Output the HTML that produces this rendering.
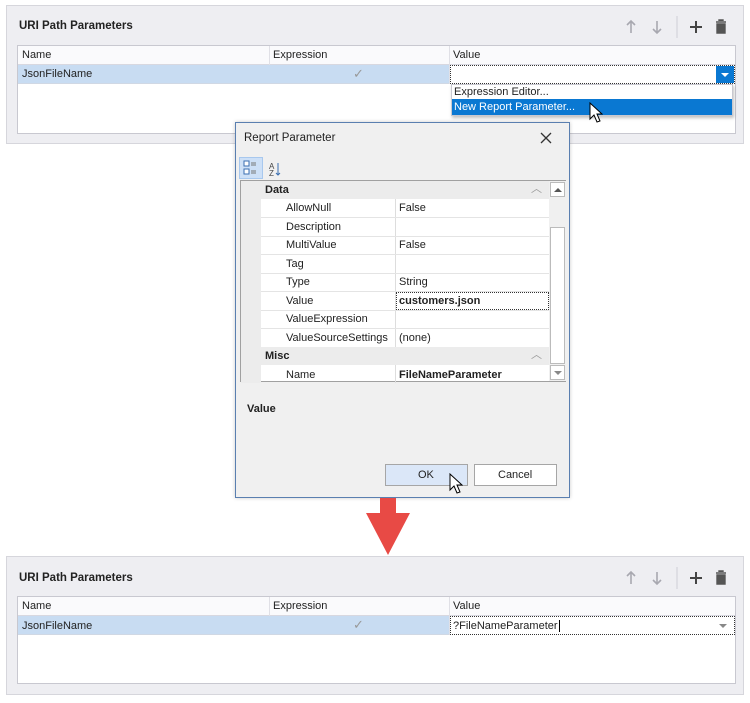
<!DOCTYPE html>
<html><head><style>
*{box-sizing:border-box;margin:0;padding:0}
body{width:750px;height:703px;background:#fff;position:relative;overflow:hidden;font-family:"Liberation Sans",sans-serif;font-size:11px;color:#222}
.a{position:absolute}
.panel{background:#eeeef2;border:1px solid #d6d6dc}
.title{font-weight:bold;font-size:11.5px;color:#222}
.grid{background:#fff;border:1px solid #c8c8d0}
.cell{position:absolute;white-space:nowrap}
.vl{position:absolute;width:1px;background:#e0e0e6}
.pg div{position:absolute;white-space:nowrap;line-height:13px}
</style></head><body>

<!-- TOP PANEL -->
<div class="a panel" style="left:6px;top:5px;width:738px;height:139px"></div>
<div class="a title" style="left:19px;top:20px">URI Path Parameters</div>
<svg class="a" style="left:620px;top:16px" width="120" height="24">
<path d="M11 5v12M7 9l4-4 4 4" stroke="#a8a8b0" stroke-width="1.6" fill="none"/>
<path d="M37 5v12M33 13l4 4 4-4" stroke="#a8a8b0" stroke-width="1.6" fill="none"/>
<line x1="57" y1="0" x2="57" y2="22" stroke="#cfcfd6"/>
<path d="M76 5v12M70 11h12" stroke="#444" stroke-width="2" fill="none"/>
<path d="M96 6h10M99 5v-1h4v1M97 8h8v9h-8z" stroke="#555" stroke-width="1.4" fill="#555"/>
</svg>
<div class="a grid" style="left:17px;top:45px;width:719px;height:89px"></div>
<div class="a" style="left:18px;top:46px;width:717px;height:19px;background:#fafafc;border-bottom:1px solid #d8d8e0"></div>
<div class="vl" style="left:269px;top:46px;height:38px"></div>
<div class="vl" style="left:449px;top:46px;height:38px"></div>
<div class="cell" style="left:22px;top:49px">Name</div>
<div class="cell" style="left:273px;top:49px">Expression</div>
<div class="cell" style="left:453px;top:49px">Value</div>
<div class="a" style="left:18px;top:65px;width:431px;height:19px;background:#c8dcf2;border-bottom:1px solid #d0d8e4"></div>
<div class="cell" style="left:22px;top:68px">JsonFileName</div>
<div class="cell" style="left:353px;top:66px;color:#999;font-size:13px">✓</div>
<div class="a" style="left:450px;top:65px;width:285px;height:19px;background:#fff;border:1px dotted #333"></div>
<div class="a" style="left:716px;top:66px;width:18px;height:17px;background:#0a78d2"></div>
<div class="a" style="left:721px;top:73px;border-left:4px solid transparent;border-right:4px solid transparent;border-top:4px solid #fff"></div>
<div class="a" style="left:451px;top:84px;width:282px;height:32px;background:#fff;border:1px solid #c8c8d0;box-shadow:1px 2px 3px rgba(0,0,0,.25)"></div>
<div class="cell" style="left:454px;top:86px">Expression Editor...</div>
<div class="a" style="left:452px;top:99px;width:280px;height:16px;background:#0a78d2"></div>
<div class="cell" style="left:454px;top:101px;color:#fff">New Report Parameter...</div>
<svg class="a" style="left:589px;top:102px" width="14" height="22"><path d="M1 1v16l4-4 3 7 3-1-3-7h5z" fill="#fff" stroke="#000"/></svg>

<!-- DIALOG -->
<div class="a" style="left:235px;top:122px;width:335px;height:376px;background:#f0f0f0;border:1px solid #5a7fb0;box-shadow:0 0 4px rgba(0,0,0,.2)"></div>
<div class="cell" style="left:244px;top:132px;font-size:11.5px">Report Parameter</div>
<svg class="a" style="left:539px;top:131px" width="14" height="14"><path d="M2 2l10 10M12 2L2 12" stroke="#333" stroke-width="1.3"/></svg>
<div class="a" style="left:239px;top:157px;width:24px;height:22px;background:#cde0f7;border:1px solid #a8c8ee"></div>
<svg class="a" style="left:243px;top:160px" width="40" height="18">
<rect x="1" y="1" width="5" height="5" fill="#fff" stroke="#3a6eb0"/><rect x="1" y="9" width="5" height="5" fill="#fff" stroke="#3a6eb0"/>
<path d="M8 3h5M8 5h5M8 11h5M8 13h5" stroke="#777"/>
<text x="26" y="9" font-size="8" font-family="Liberation Sans" fill="#444">A</text><text x="26" y="16" font-size="8" font-family="Liberation Sans" fill="#444">Z</text>
<path d="M35 3v12M33 13l2 2 2-2" stroke="#3a6eb0" fill="none"/>
</svg>
<div class="a pg" style="left:240px;top:180px;width:326px;height:202px;background:#fff;border:1px solid #a0a0a0">
 <div style="left:0;top:0;width:308px;height:18px;background:#ececec"></div>
 <div style="left:24px;top:3px;font-weight:bold">Data</div>
 <div style="left:290px;top:2px;color:#999">︿</div>
 <div style="left:0;top:18px;width:20px;height:148px;background:#ececec"></div>
 <div style="left:0;top:166px;width:308px;height:18px;background:#ececec"></div>
 <div style="left:24px;top:169px;font-weight:bold">Misc</div>
 <div style="left:290px;top:168px;color:#999">︿</div>
 <div style="left:0;top:184px;width:20px;height:18px;background:#ececec"></div>
 <div style="left:154px;top:18px;width:1px;height:148px;background:#ddd"></div>
 <div style="left:154px;top:184px;width:1px;height:18px;background:#ddd"></div>
 <div style="left:20px;top:36px;width:288px;height:1px;background:#e4e4e4"></div>
 <div style="left:20px;top:55px;width:288px;height:1px;background:#e4e4e4"></div>
 <div style="left:20px;top:73px;width:288px;height:1px;background:#e4e4e4"></div>
 <div style="left:20px;top:92px;width:288px;height:1px;background:#e4e4e4"></div>
 <div style="left:20px;top:110px;width:288px;height:1px;background:#e4e4e4"></div>
 <div style="left:20px;top:129px;width:288px;height:1px;background:#e4e4e4"></div>
 <div style="left:20px;top:147px;width:288px;height:1px;background:#e4e4e4"></div>
 <div style="left:45px;top:21px">AllowNull</div><div style="left:158px;top:21px">False</div>
 <div style="left:45px;top:40px">Description</div>
 <div style="left:45px;top:58px">MultiValue</div><div style="left:158px;top:58px">False</div>
 <div style="left:45px;top:77px">Tag</div>
 <div style="left:45px;top:95px">Type</div><div style="left:158px;top:95px">String</div>
 <div style="left:155px;top:111px;width:153px;height:18px;border:1px dotted #333"></div>
 <div style="left:45px;top:114px">Value</div><div style="left:158px;top:114px;font-weight:bold">customers.json</div>
 <div style="left:45px;top:132px">ValueExpression</div>
 <div style="left:45px;top:151px">ValueSourceSettings</div><div style="left:158px;top:151px">(none)</div>
 <div style="left:45px;top:188px">Name</div><div style="left:158px;top:188px;font-weight:bold">FileNameParameter</div>
 <div style="left:308px;top:0;width:17px;height:200px;background:#f0f0f0"></div>
 <div style="left:309px;top:1px;width:15px;height:15px;border:1px solid #bbb;background:#fff"></div>
 <div style="left:313px;top:7px;border-left:4px solid transparent;border-right:4px solid transparent;border-bottom:4px solid #555"></div>
 <div style="left:309px;top:46px;width:15px;height:137px;border:1px solid #bbb;background:#fff"></div>
 <div style="left:309px;top:184px;width:15px;height:15px;border:1px solid #bbb;background:#fff"></div>
 <div style="left:313px;top:190px;border-left:4px solid transparent;border-right:4px solid transparent;border-top:4px solid #888"></div>
</div>
<div class="cell" style="left:247px;top:403px;font-weight:bold">Value</div>
<div class="a" style="left:385px;top:464px;width:83px;height:22px;background:#dbe7f8;border:1px solid #a6a6a6"></div>
<div class="cell" style="left:418px;top:469px">OK</div>
<div class="a" style="left:474px;top:464px;width:83px;height:22px;background:#fff;border:1px solid #a6a6a6"></div>
<div class="cell" style="left:498px;top:469px">Cancel</div>
<svg class="a" style="left:449px;top:473px" width="14" height="22"><path d="M1 1v16l4-4 3 7 3-1-3-7h5z" fill="#fff" stroke="#000"/></svg>

<!-- ARROW -->
<svg class="a" style="left:363px;top:498px" width="50" height="60"><path d="M17 0h16v15h14L25 57 3 15h14z" fill="#e84a45"/></svg>

<!-- BOTTOM PANEL -->
<div class="a panel" style="left:6px;top:556px;width:738px;height:139px"></div>
<div class="a title" style="left:19px;top:572px">URI Path Parameters</div>
<svg class="a" style="left:620px;top:567px" width="120" height="24">
<path d="M11 5v12M7 9l4-4 4 4" stroke="#a8a8b0" stroke-width="1.6" fill="none"/>
<path d="M37 5v12M33 13l4 4 4-4" stroke="#a8a8b0" stroke-width="1.6" fill="none"/>
<line x1="57" y1="0" x2="57" y2="22" stroke="#cfcfd6"/>
<path d="M76 5v12M70 11h12" stroke="#444" stroke-width="2" fill="none"/>
<path d="M96 6h10M99 5v-1h4v1M97 8h8v9h-8z" stroke="#555" stroke-width="1.4" fill="#555"/>
</svg>
<div class="a grid" style="left:17px;top:596px;width:719px;height:88px"></div>
<div class="a" style="left:18px;top:597px;width:717px;height:19px;background:#fafafc;border-bottom:1px solid #d8d8e0"></div>
<div class="vl" style="left:269px;top:597px;height:38px"></div>
<div class="vl" style="left:449px;top:597px;height:38px"></div>
<div class="cell" style="left:22px;top:600px">Name</div>
<div class="cell" style="left:273px;top:600px">Expression</div>
<div class="cell" style="left:453px;top:600px">Value</div>
<div class="a" style="left:18px;top:616px;width:431px;height:19px;background:#c8dcf2;border-bottom:1px solid #d0d8e4"></div>
<div class="cell" style="left:22px;top:620px">JsonFileName</div>
<div class="cell" style="left:353px;top:617px;color:#999;font-size:13px">✓</div>
<div class="a" style="left:450px;top:616px;width:285px;height:19px;background:#fff;border:1px dotted #333"></div>
<div class="cell" style="left:453px;top:620px">?FileNameParameter<span style="border-left:1px solid #000;margin-left:1px"></span></div>
<div class="a" style="left:719px;top:624px;border-left:4px solid transparent;border-right:4px solid transparent;border-top:4px solid #888"></div>
</body></html>
